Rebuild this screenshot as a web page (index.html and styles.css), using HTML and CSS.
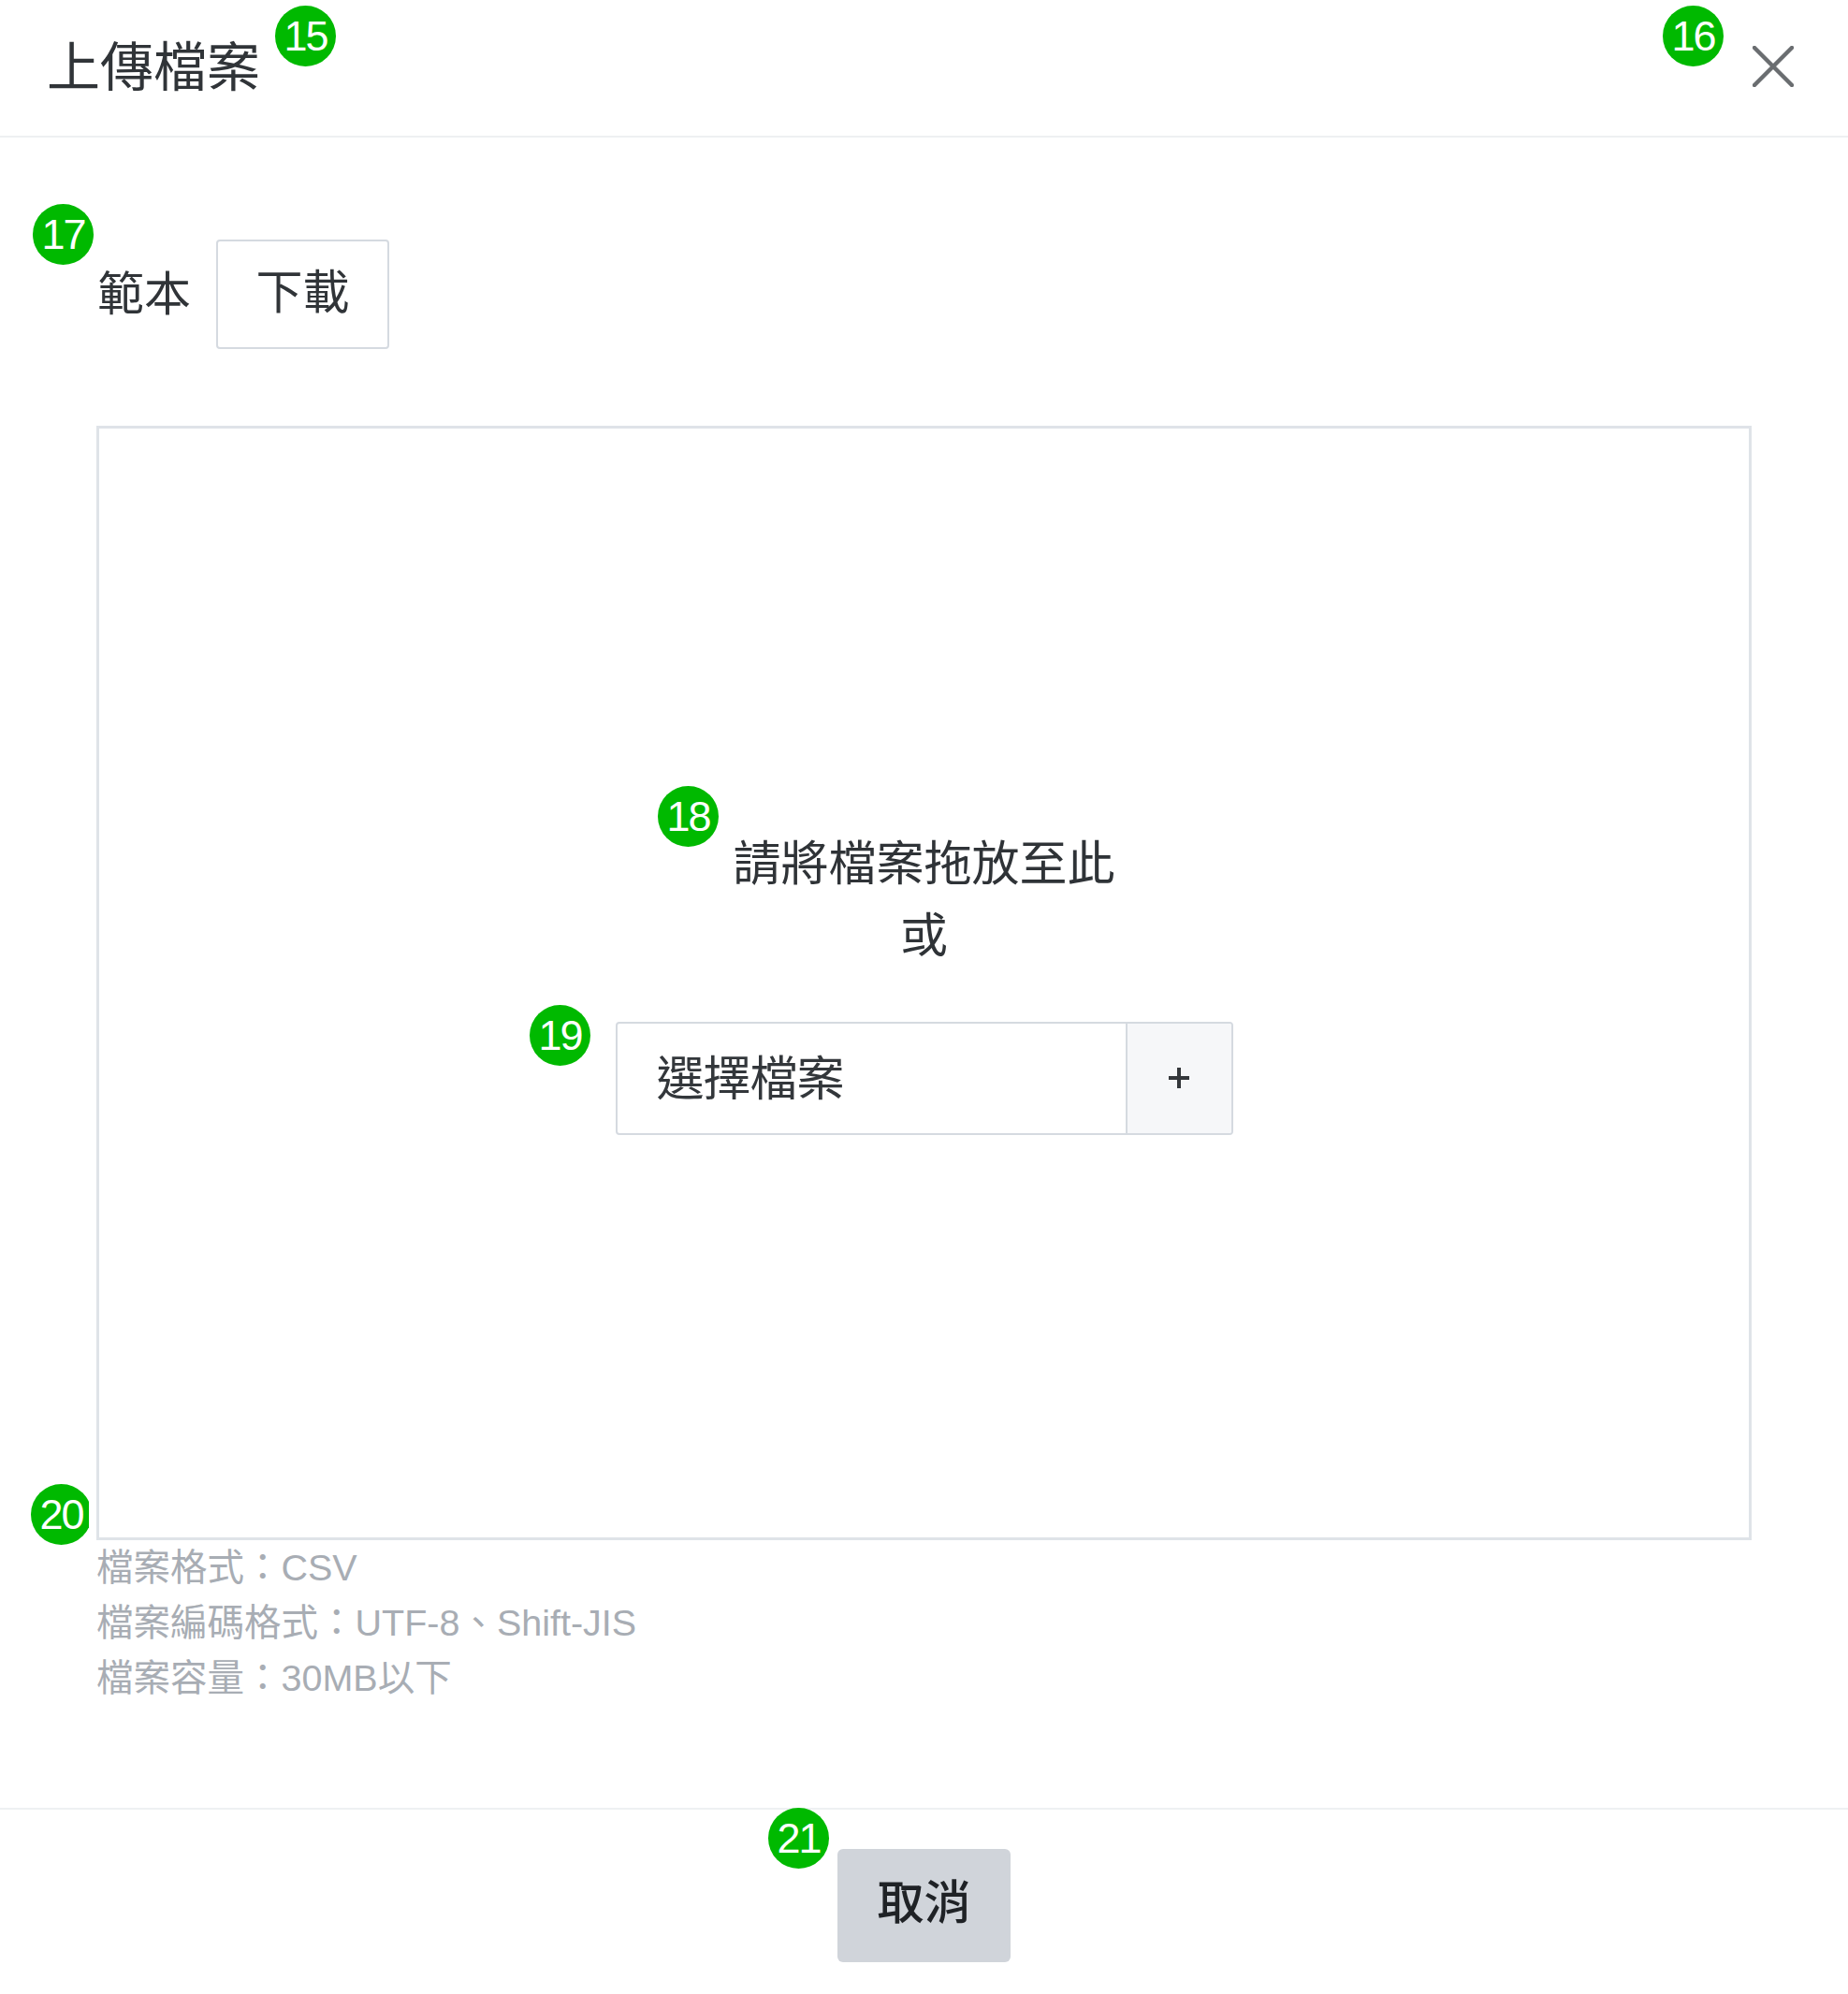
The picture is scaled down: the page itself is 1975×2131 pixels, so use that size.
FILE: index.html
```html
<!DOCTYPE html>
<html lang="zh-Hant">
<head>
<meta charset="utf-8">
<title>上傳檔案</title>
<link rel="stylesheet" href="styles.css">
</head>
<body>
<div class="modal">
  <header class="modal-header">
    <h2 class="title">上傳檔案</h2>
    <button class="close" aria-label="關閉">
      <svg width="44" height="44" viewBox="0 0 44 44"><path d="M2 2 L42 42 M42 2 L2 42" stroke="#6a6d70" stroke-width="4.5" stroke-linecap="round" fill="none"/></svg>
    </button>
  </header>

  <main class="modal-body">
    <div class="template-row">
      <span class="label">範本</span>
      <button class="btn-outline">下載</button>
    </div>

    <div class="dropzone">
      <p class="drop-text">請將檔案拖放至此<br>或</p>
      <div class="file-picker">
        <span class="file-label">選擇檔案</span>
        <span class="file-add">
          <svg width="24" height="24" viewBox="0 0 24 24"><path d="M12 1 V23 M1 12 H23" stroke="#34373b" stroke-width="4" fill="none"/></svg>
        </span>
      </div>
    </div>

    <ul class="notes">
      <li>檔案格式：CSV</li>
      <li>檔案編碼格式：UTF-8、Shift-JIS</li>
      <li>檔案容量：30MB以下</li>
    </ul>
  </main>

  <footer class="modal-footer">
    <button class="btn-cancel">取消</button>
  </footer>

  <span class="badge b15">15</span>
  <span class="badge b16">16</span>
  <span class="badge b17">17</span>
  <span class="badge b18">18</span>
  <span class="badge b19">19</span>
  <span class="badge b20">20</span>
  <span class="badge b21">21</span>
</div>
</body>
</html>
```

FILE: styles.css
```css
* { box-sizing: border-box; }

html, body {
  margin: 0;
  padding: 0;
  background: #ffffff;
}

body {
  font-family: "Liberation Sans", "Noto Sans CJK TC", sans-serif;
  color: #2f3337;
}

.modal {
  position: relative;
  width: 1975px;
  min-height: 2131px;
  background: #ffffff;
}

.modal-header {
  height: 147px;
  border-bottom: 2px solid #eef0f2;
  display: flex;
  align-items: center;
  justify-content: space-between;
  padding: 0 58px 0 50px;
}

.title {
  margin: 0;
  font-size: 57px;
  font-weight: 400;
  line-height: 1;
  color: #303438;
}

.close {
  border: none;
  background: transparent;
  padding: 0;
  width: 44px;
  height: 44px;
  display: flex;
  margin-top: -4px;
}

.modal-body {
  padding: 109px 103px 109px;
}

.template-row {
  display: flex;
  align-items: center;
  gap: 27px;
  height: 117px;
  margin-bottom: 82px;
}

.label {
  font-size: 50px;
  line-height: 1;
  color: #303438;
  padding-left: 1px;
}

.btn-outline {
  width: 185px;
  height: 117px;
  border: 2px solid #d5dae0;
  border-radius: 4px;
  background: #ffffff;
  font-family: inherit;
  font-size: 50px;
  line-height: 1;
  color: #303438;
  padding: 0 0 4px;
}

.dropzone {
  height: 1191px;
  border: 3px solid #dfe3e8;
  display: flex;
  flex-direction: column;
  align-items: center;
  justify-content: center;
  padding-bottom: 4px;
}

.drop-text {
  margin: 0 0 53px;
  font-size: 51px;
  line-height: 77px;
  text-align: center;
  color: #2f3337;
}

.file-picker {
  width: 660px;
  height: 121px;
  border: 2px solid #d5dae0;
  border-radius: 4px;
  display: flex;
  overflow: hidden;
}

.file-label {
  flex: 1;
  display: flex;
  align-items: center;
  padding-left: 42px;
  font-size: 51px;
  letter-spacing: -1px;
  color: #33373b;
  padding-bottom: 6px;
}

.file-add {
  width: 113px;
  border-left: 2px solid #d5dae0;
  background: #f6f7f9;
  display: flex;
  align-items: center;
  justify-content: center;
}

.notes {
  list-style: none;
  margin: 0;
  padding: 0;
  font-size: 39.5px;
  line-height: 59px;
  color: #a8adb4;
}

.modal-footer {
  border-top: 2px solid #eef0f2;
  padding: 42px 0 34px;
  display: flex;
  justify-content: center;
}

.btn-cancel {
  width: 185px;
  height: 121px;
  border: none;
  border-radius: 6px;
  background: #d0d4da;
  font-family: inherit;
  font-size: 50px;
  font-weight: 500;
  line-height: 1;
  color: #1f2226;
  padding: 0 0 6px;
}

.badge {
  position: absolute;
  width: 65px;
  height: 65px;
  border-radius: 50%;
  background: #00b900;
  color: #ffffff;
  font-family: "Liberation Sans", sans-serif;
  font-size: 45px;
  line-height: 65px;
  text-align: center;
  letter-spacing: -2px;
}

.b15 { left: 294px; top: 6px; }
.b16 { left: 1777px; top: 6px; }
.b17 { left: 35px; top: 218px; }
.b18 { left: 703px; top: 840px; }
.b19 { left: 566px; top: 1074px; }
.b20 { left: 33px; top: 1586px; clip-path: inset(0 3px 0 0); }
.b21 { left: 821px; top: 1932px; }
```
